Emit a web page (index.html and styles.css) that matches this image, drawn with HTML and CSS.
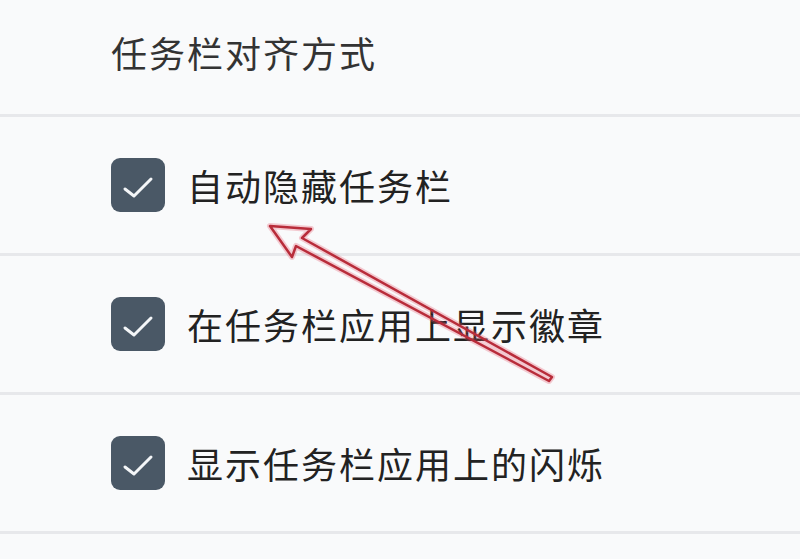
FILE: index.html
```html
<!DOCTYPE html>
<html lang="zh-CN">
<head>
    <meta charset="UTF-8">
    <meta name="viewport" content="width=device-width, initial-scale=1.0">
    <title>任务栏行为</title>
    <link rel="stylesheet" href="styles.css">
</head>
<body>
    <div class="panel">
        <div class="title-row">任务栏对齐方式</div>

        <div class="option">
            <span class="check">
                <svg viewBox="0 0 54 54" width="54" height="54"><path d="M14 31 L23 38 L40 21"/></svg>
            </span>
            <span class="label">自动隐藏任务栏</span>
        </div>

        <div class="option">
            <span class="check">
                <svg viewBox="0 0 54 54" width="54" height="54"><path d="M14 31 L23 38 L40 21"/></svg>
            </span>
            <span class="label">在任务栏应用上显示徽章</span>
        </div>

        <div class="option">
            <span class="check">
                <svg viewBox="0 0 54 54" width="54" height="54"><path d="M14 31 L23 38 L40 21"/></svg>
            </span>
            <span class="label">显示任务栏应用上的闪烁</span>
        </div>
    </div>

    <!-- annotation arrow drawn over the screenshot -->
    <svg class="arrow" width="800" height="559" viewBox="0 0 800 559">
        <path class="glow" d="M270 226 L311 229 L302 238 L552 377 L549 381 L296 246 L292 257 Z"/>
        <path class="line" d="M270 226 L311 229 L302 238 L552 377 L549 381 L296 246 L292 257 Z"/>
    </svg>
</body>
</html>
```

FILE: styles.css
```css
body {
    margin: 0;
    background: #f9fafb;
    font-family: "Noto Sans CJK SC", "Microsoft YaHei", sans-serif;
    color: #222;
    overflow: hidden;
}
.panel {
    width: 800px;
    height: 559px;
}
.title-row {
    height: 117px;
    box-sizing: border-box;
    padding: 26px 0 0 111px;
    font-size: 36px;
    letter-spacing: 2px;
    line-height: 52px;
    color: #333;
    border-bottom: 3px solid #e7e8eb;
}
.option {
    height: 139px;
    box-sizing: border-box;
    display: flex;
    align-items: center;
    gap: 22px;
    padding-left: 111px;
    border-bottom: 3px solid #e7e8eb;
}
.check {
    width: 54px;
    height: 54px;
    border-radius: 9px;
    background: #4a5866;
    display: flex;
}
.check path {
    fill: none;
    stroke: #f4f6f8;
    stroke-width: 3;
    stroke-linecap: round;
    stroke-linejoin: round;
}
.label {
    font-size: 36px;
    letter-spacing: 2px;
    line-height: 52px;
    color: #222;
}
.arrow {
    position: absolute;
    left: 0;
    top: 0;
    pointer-events: none;
}
.arrow .glow {
    fill: none;
    stroke: rgba(230, 90, 110, 0.3);
    stroke-width: 6;
    stroke-linejoin: round;
}
.arrow .line {
    fill: none;
    stroke: #b82c3a;
    stroke-width: 2.5;
    stroke-linejoin: round;
}
```
